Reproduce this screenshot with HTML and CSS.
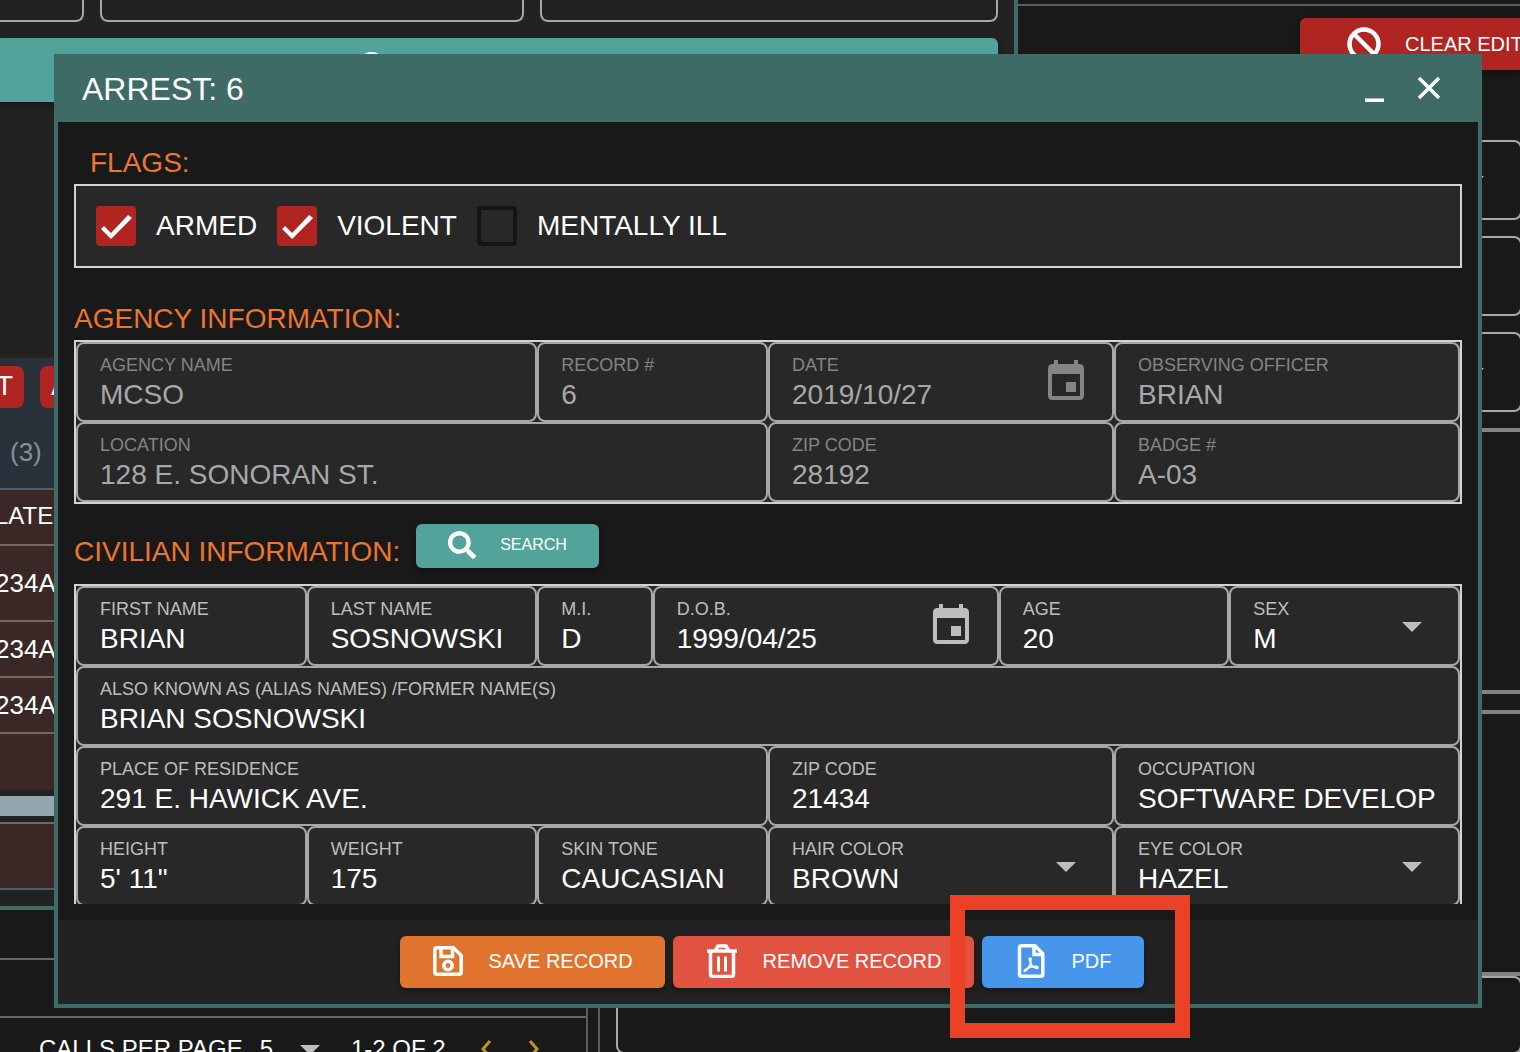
FILE: index.html
```html
<!DOCTYPE html>
<html lang="en">
<head>
<meta charset="utf-8">
<title>Arrest: 6</title>
<link rel="stylesheet" href="styles.css">
</head>
<body>
<div class="app">
  <div class="upper">
    <main class="lookup">
      <div class="lookup-fields">
        <input class="stub stub-a" type="text" aria-label="Lookup first field">
        <input class="stub" type="text" aria-label="Lookup second field">
        <input class="stub" type="text" aria-label="Lookup third field">
      </div>
      <button class="btn btn-teal btn-lookup" type="button" aria-label="Search">
        <svg class="icon-36" viewBox="0 0 512 512"><path fill="#fff" d="M505 442.700L405.300 343c-4.500-4.500-10.600-7-17-7H372c27.600-35.300 44-79.700 44-128C416 93.100 322.900 0 208 0S0 93.100 0 208s93.100 208 208 208c48.300 0 92.700-16.400 128-44v16.300c0 6.400 2.500 12.500 7 17l99.700 99.700c9.400 9.400 24.600 9.400 33.900 0l28.300-28.300c9.400-9.400 9.400-24.600.1-34zM208 336c-70.700 0-128-57.200-128-128 0-70.700 57.200-128 128-128 70.700 0 128 57.200 128 128 0 70.700-57.200 128-128 128z"/></svg>
      </button>
      <section class="results">
        <div class="results-head">
          <div class="chips"><span class="chip chip-first">T</span><span class="chip">A</span></div>
          <div class="count">(3)</div>
        </div>
        <table class="plates">
          <thead><tr><th>LATE</th></tr></thead>
          <tbody>
            <tr class="tall"><td>234A</td></tr>
            <tr><td>234A</td></tr>
            <tr><td>234A</td></tr>
          </tbody>
        </table>
        <div class="row-blank"></div>
        <div class="scrollbar"></div>
        <div class="row-last"></div>
      </section>
    </main>
    <aside class="editor">
      <button class="btn btn-clear" type="button">
        <svg class="icon-34" viewBox="0 0 34 34"><g fill="none" stroke="#fff" stroke-width="4.500"><circle cx="17" cy="17" r="14.500"/><path d="M7 7l20 20"/></g></svg>
        CLEAR EDIT
      </button>
      <div class="side-fields">
        <div class="side-field"><svg class="icon-48" viewBox="0 0 24 24"><path d="M7 10l5 5 5-5z"/></svg></div>
        <div class="side-field"></div>
        <div class="side-field"><svg class="icon-48" viewBox="0 0 24 24"><path d="M7 10l5 5 5-5z"/></svg></div>
      </div>
      <div class="side-box"></div>
      <div class="side-box side-box-open"></div>
    </aside>
  </div>
  <div class="lower">
    <section class="calls">
      <div class="calls-head"></div>
      <div class="calls-row"></div>
      <div class="pager">
        <span>CALLS PER PAGE</span>
        <span class="pager-size">5</span>
        <svg class="icon-48" viewBox="0 0 24 24"><path d="M7 10l5 5 5-5z"/></svg>
        <span class="pager-range">1-2 OF 2</span>
        <svg class="chev" viewBox="0 0 12 20"><path d="M10 2L3 10l7 8"/></svg>
        <svg class="chev" viewBox="0 0 12 20"><path d="M2 2l7 8-7 8"/></svg>
      </div>
    </section>
    <section class="notes">
      <div class="notes-edge"></div>
      <textarea class="notes-text" aria-label="Notes"></textarea>
    </section>
  </div>

  <form class="window" role="dialog" aria-labelledby="window-title">
    <header class="window-head">
      <h1 id="window-title">ARREST: 6</h1>
      <button class="head-btn" type="button" aria-label="Minimize"><svg viewBox="0 0 26 26"><path fill="none" stroke="#fff" stroke-width="3.500" d="M3 24.200h19"/></svg></button>
      <button class="head-btn" type="button" aria-label="Close"><svg viewBox="0 0 26 26"><path fill="none" stroke="#fff" stroke-width="3.500" d="M3 2l20 20M23 2L3 22"/></svg></button>
    </header>
    <div class="window-body">
      <div class="scroll">
        <h2 class="flags-title">FLAGS:</h2>
        <div class="flags">
          <label class="flag"><input type="checkbox" checked>ARMED</label>
          <label class="flag"><input type="checkbox" checked>VIOLENT</label>
          <label class="flag"><input type="checkbox">MENTALLY ILL</label>
        </div>

        <h2 class="agency-title">AGENCY INFORMATION:</h2>
        <div class="fields locked">
          <div class="field w4"><label for="agency">AGENCY NAME</label><input id="agency" type="text" value="MCSO" disabled></div>
          <div class="field w2"><label for="record">RECORD #</label><input id="record" type="text" value="6" disabled></div>
          <div class="field w3"><label for="date">DATE</label><input id="date" type="text" value="2019/10/27" disabled><svg class="icon-48" viewBox="0 0 24 24"><path d="M17 12h-5v5h5v-5zM16 1v2H8V1H6v2H5c-1.110 0-1.990.9-1.990 2L3 19c0 1.100.89 2 2 2h14c1.100 0 2-.9 2-2V5c0-1.100-.9-2-2-2h-1V1h-2zm3 18H5V8h14v11z"/></svg></div>
          <div class="field w3"><label for="officer">OBSERVING OFFICER</label><input id="officer" type="text" value="BRIAN" disabled></div>
          <div class="field w6"><label for="location">LOCATION</label><input id="location" type="text" value="128 E. SONORAN ST." disabled></div>
          <div class="field w3"><label for="zip">ZIP CODE</label><input id="zip" type="text" value="28192" disabled></div>
          <div class="field w3"><label for="badge">BADGE #</label><input id="badge" type="text" value="A-03" disabled></div>
        </div>

        <div class="civilian-head">
          <h2>CIVILIAN INFORMATION:</h2>
          <button class="btn btn-teal btn-search" type="button">
            <svg class="icon-28" viewBox="0 0 512 512"><path fill="#fff" d="M505 442.700L405.300 343c-4.500-4.500-10.600-7-17-7H372c27.600-35.300 44-79.700 44-128C416 93.100 322.900 0 208 0S0 93.100 0 208s93.100 208 208 208c48.300 0 92.700-16.400 128-44v16.300c0 6.400 2.500 12.500 7 17l99.700 99.700c9.400 9.400 24.600 9.400 33.900 0l28.300-28.300c9.400-9.400 9.400-24.600.1-34zM208 336c-70.700 0-128-57.200-128-128 0-70.700 57.200-128 128-128 70.700 0 128 57.200 128 128 0 70.700-57.200 128-128 128z"/></svg>
            SEARCH
          </button>
        </div>
        <div class="fields">
          <div class="field w2"><label for="first">FIRST NAME</label><input id="first" type="text" value="BRIAN"></div>
          <div class="field w2"><label for="last">LAST NAME</label><input id="last" type="text" value="SOSNOWSKI"></div>
          <div class="field w1"><label for="mi">M.I.</label><input id="mi" type="text" value="D"></div>
          <div class="field w3"><label for="dob">D.O.B.</label><input id="dob" type="text" value="1999/04/25"><svg class="icon-48" viewBox="0 0 24 24"><path d="M17 12h-5v5h5v-5zM16 1v2H8V1H6v2H5c-1.110 0-1.990.9-1.990 2L3 19c0 1.100.89 2 2 2h14c1.100 0 2-.9 2-2V5c0-1.100-.9-2-2-2h-1V1h-2zm3 18H5V8h14v11z"/></svg></div>
          <div class="field w2"><label for="age">AGE</label><input id="age" type="text" value="20"></div>
          <div class="field w2"><label for="sex">SEX</label><select id="sex"><option>M</option></select><svg class="icon-48" viewBox="0 0 24 24"><path d="M7 10l5 5 5-5z"/></svg></div>
          <div class="field w12"><label for="aka">ALSO KNOWN AS (ALIAS NAMES) /FORMER NAME(S)</label><input id="aka" type="text" value="BRIAN SOSNOWSKI"></div>
          <div class="field w6"><label for="residence">PLACE OF RESIDENCE</label><input id="residence" type="text" value="291 E. HAWICK AVE."></div>
          <div class="field w3"><label for="home-zip">ZIP CODE</label><input id="home-zip" type="text" value="21434"></div>
          <div class="field w3"><label for="job">OCCUPATION</label><input id="job" type="text" value="SOFTWARE DEVELOPER"></div>
          <div class="field w2"><label for="height">HEIGHT</label><input id="height" type="text" value="5' 11&quot;"></div>
          <div class="field w2"><label for="weight">WEIGHT</label><input id="weight" type="text" value="175"></div>
          <div class="field w2"><label for="skin">SKIN TONE</label><input id="skin" type="text" value="CAUCASIAN"></div>
          <div class="field w3"><label for="hair">HAIR COLOR</label><select id="hair"><option>BROWN</option></select><svg class="icon-48" viewBox="0 0 24 24"><path d="M7 10l5 5 5-5z"/></svg></div>
          <div class="field w3"><label for="eye">EYE COLOR</label><select id="eye"><option>HAZEL</option></select><svg class="icon-48" viewBox="0 0 24 24"><path d="M7 10l5 5 5-5z"/></svg></div>
        </div>
      </div>
    </div>
    <footer class="window-foot">
      <button class="btn btn-save" type="button">
        <svg class="icon-32" viewBox="0 0 32 32"><g fill="none" stroke="#fff" stroke-width="3.500"><path d="M5 2.800h16.500l7.700 7.700V27.200q0 2-2 2H4.800q-2 0-2-2V4.800q0-2 2-2z"/><path d="M9 3v8.500h11.500V3"/><circle cx="16" cy="20.500" r="4.200"/></g></svg>
        SAVE RECORD
      </button>
      <button class="btn btn-remove" type="button">
        <svg class="icon-34" viewBox="0 0 34 34"><g fill="none" stroke="#fff" stroke-width="3.500"><path d="M2 7h30M10.500 6l2.500-4h8l2.500 4M5.500 7v23.500q0 2 2 2h19q2 0 2-2V7"/><path stroke-width="3" d="M13.500 12.500v15M20.500 12.500v15"/></g></svg>
        REMOVE RECORD
      </button>
      <button class="btn btn-pdf" type="button">
        <svg class="icon-34" viewBox="0 0 34 34"><g fill="none" stroke="#fff" stroke-width="3.500"><path d="M7.500 1.800h13.500l7.800 7.800v20.600q0 2-2 2H7.500q-2 0-2-2V3.800q0-2 2-2z"/><path d="M20 2v8.500h8.500"/></g><path fill="none" stroke="#fff" stroke-width="1.800" d="M11 27.300c3-2 6.200-6.800 5.900-12.100-.1-1.600-1.700-1.400-1.500.1.500 4.200 3.400 8.700 7.200 9.100 2.200.1 1.800-1.900-.6-2-4 0-8 1.300-10.800 3.300-1.300 1-1.100 2.200-.2 1.600z"/></svg>
        PDF
      </button>
    </footer>
  </form>
  <div class="highlight"></div>
</div>
</body>
</html>
```
FILE: styles.css
```css
* { box-sizing: border-box; }
body {
  margin: 0;
  background: #191919;
  color: #fff;
  font-family: "Liberation Sans", Arial, sans-serif;
  font-size: 28px;
}
h1, h2 { margin: 0; font-weight: 400; }
svg { display: block; flex: none; }
input, select, textarea, button { font-family: inherit; color: inherit; margin: 0; }

.icon-28 { width: 28px; height: 28px; }
.icon-32 { width: 32px; height: 32px; }
.icon-34 { width: 34px; height: 34px; }
.icon-36 { width: 36px; height: 36px; }
.icon-48 { width: 48px; height: 48px; fill: #bebebe; }

.app { position: relative; height: 100vh; min-height: 800px; overflow: hidden; }

/* buttons */
.btn {
  display: flex;
  align-items: center;
  justify-content: center;
  gap: 24px;
  height: 52px;
  padding: 0 32px 2px;
  border: 0;
  border-radius: 6px;
  font-size: 20px;
  line-height: 24px;
  white-space: nowrap;
  box-shadow: 0 3px 6px rgba(0, 0, 0, .35);
}
.btn-teal { background: #52a49a; }
.btn-save { background: #e0742f; }
.btn-remove { background: #e15241; }
.btn-pdf { background: #4796ec; }
.btn-clear {
  width: 220px;
  margin-left: auto;
  padding: 0 0 0 47px;
  justify-content: flex-start;
  border-radius: 6px 0 0 6px;
  background: #b02522;
}

/* area above */
.upper { display: grid; grid-template-columns: 1018fr 502fr; }
.lookup { background: #222; border-right: 4px solid #3f6b67; border-bottom: 4px solid #3f6b67; padding-bottom: 16px; }
.lookup-fields { display: grid; grid-template-columns: 84fr 424fr 458fr; gap: 16px; padding-right: 16px; margin-bottom: 16px; }
.stub { min-width: 0; width: 100%; height: 22px; border: 2px solid #a8a8a8; border-top: 0; border-radius: 0 0 8px 8px; background: none; }
.stub-a { border-left: 0; border-bottom-left-radius: 0; }
.btn-lookup { width: calc(100% - 16px); height: 64px; padding: 0 0 0 357px; justify-content: flex-start; border-radius: 0 6px 6px 0; }
.results { margin-top: 256px; }
.results-head { height: 132px; padding-top: 8px; background: #29323a; border-bottom: 2px solid #555c66; }
.chips { display: flex; gap: 16px; margin-bottom: 28px; }
.chip { height: 42px; padding: 0 11px; border-radius: 8px; background: #b02522; line-height: 40px; }
.chip-first { display: flex; justify-content: flex-end; width: 24px; border-radius: 0 8px 8px 0; }
.count { padding-left: 10px; font-size: 26px; line-height: 32px; color: #8c8f92; }
.plates { width: 100%; margin-left: -5px; border-collapse: separate; border-spacing: 0; background: #3a2827; }
.plates th, .plates td { height: 56px; padding: 0; border-bottom: 2px solid #756765; text-align: left; font-weight: 400; font-size: 26px; line-height: 32px; }
.plates th { padding-bottom: 2px; font-size: 24px; }
.plates .tall td { height: 76px; }
.row-blank { height: 56px; background: #3a2827; }
.scrollbar { height: 20px; margin: 6px 0; background: #94a6ae; }
.row-last { height: 68px; background: #3a2827; border-top: 2px solid #756765; border-bottom: 2px solid #555c66; }

.editor { margin-top: 4px; padding-top: 12px; border-top: 2px solid #555c66; display: flex; flex-direction: column; }
.side-fields { display: flex; flex-direction: column; gap: 16px; margin: 70px -2px 16px 0; }
.side-field { display: flex; align-items: center; justify-content: flex-end; height: 80px; padding-right: 22px; border: 2px solid #a8a8a8; border-radius: 8px; }
.side-box { height: 266px; margin-bottom: 16px; border: 4px solid #838383; border-right: 0; }
.side-box-open { flex: 1; margin: 0; border-bottom: 0; }

/* area below */
.lower { display: grid; grid-template-columns: 588fr 922fr; gap: 10px; }
.calls { border-right: 2px solid #555c66; }
.calls-head { height: 50px; border-bottom: 2px solid #666; }
.calls-row { height: 58px; border-bottom: 2px solid #666; }
.pager { display: flex; align-items: center; height: 62px; padding-left: 39px; font-size: 24px; }
.pager-size { margin-left: 17px; }
.pager .icon-48 { margin-left: 13px; }
.pager-range { margin: 0 34px 0 17px; }
.chev { width: 12px; height: 20px; margin-right: 36px; fill: none; stroke: #c0922f; stroke-width: 3; }
.notes { border-left: 2px solid #555c66; padding: 62px 0 0 16px; }
.notes-edge { height: 4px; background: #838383; }
.notes-text { display: block; width: calc(100% + 2px); height: 78px; border: 2px solid #a8a8a8; border-radius: 8px; background: none; resize: none; }

/* arrest window, floating over the page */
.window {
  position: absolute;
  inset: 54px 38px 44px 54px;
  display: flex;
  flex-direction: column;
  border: 4px solid #3f6b67;
  background: #191919;
}
.window-head { display: flex; align-items: center; height: 64px; padding: 0 36px 2px 24px; gap: 28px; background: #3f6b67; }
.window-head h1 { flex: 1; font-size: 32px; line-height: 36px; }
.head-btn { padding: 0; border: 0; background: none; }
.head-btn svg { width: 26px; height: 26px; }
.window-body { flex: 1; min-height: 0; padding: 0 16px 16px; }
.scroll { height: 100%; padding-top: 25px; overflow: hidden; }
.scroll h2 { font-size: 28px; line-height: 32px; color: #ec752f; }
.scroll .flags-title { padding-left: 16px; margin-bottom: 5px; }
.scroll .agency-title { margin: 35px 0 5px; }

.flags { display: flex; gap: 20px; align-items: center; height: 84px; padding: 0 20px; border: 2px solid #d3d3d3; background: #282828; }
.flag { display: flex; align-items: center; gap: 20px; line-height: 34px; }
.flag input {
  appearance: none;
  width: 40px;
  height: 40px;
  border: 4px solid #141414;
  border-radius: 4px;
}
.flag input:checked { border-color: #b02522; background: #b02522; }
.flag input:checked::before {
  content: "";
  display: block;
  width: 32px;
  height: 32px;
  background: #fff;
  clip-path: polygon(4px 16px, 11px 23px, 28px 5px, 32px 8px, 11px 29px, 1px 19px);
}

.fields { display: grid; grid-template-columns: repeat(12, 1fr); border: 2px solid #d3d3d3; background: #282828; }
.field { position: relative; display: flex; flex-direction: column; gap: 4px; min-width: 0; height: 80px; padding: 11px 22px 0; border: 2px solid #a8a8a8; border-radius: 8px; }
.field label { font-size: 18px; line-height: 20px; color: #bebebe; white-space: nowrap; }
.field input, .field select { width: 100%; height: 32px; padding: 0; border: 0; background: none; font-size: 28px; line-height: 32px; appearance: none; outline: 0; }
.field option { color: #000; }
.field > svg { position: absolute; right: 22px; top: 14px; pointer-events: none; }
.locked label { color: #848484; }
.locked input { color: #a8a8a8; }
.locked svg { fill: #848484; }
.w1 { grid-column: span 1; }
.w2 { grid-column: span 2; }
.w3 { grid-column: span 3; }
.w4 { grid-column: span 4; }
.w6 { grid-column: span 6; }
.w12 { grid-column: span 12; }

.civilian-head { display: flex; align-items: flex-end; gap: 16px; margin: 20px 0 16px; }
.btn-search { height: 44px; font-size: 16px; padding-bottom: 3px; }

.window-foot { display: flex; justify-content: center; align-items: center; gap: 8px; height: 84px; padding-left: 8px; background: #222; }

/* marker drawn round the PDF button */
.highlight { position: absolute; left: 950px; top: 895px; width: 240px; height: 143px; border: 15px solid #ec4027; }
```
